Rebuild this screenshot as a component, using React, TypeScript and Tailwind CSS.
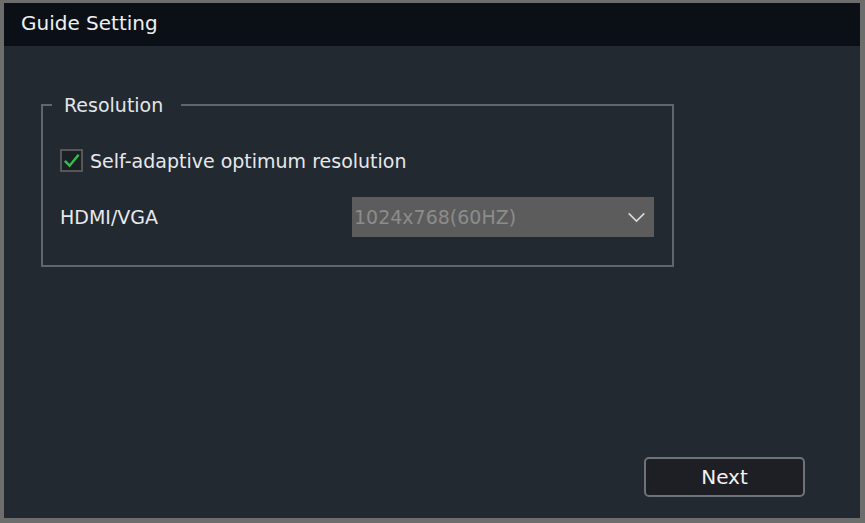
export default function App() {
  return (
    <div
      className="w-[865px] h-[523px] bg-[#6d6d6d] pl-[4px] pt-[3px] pr-[5px] pb-[5px]"
      style={{ fontFamily: '"DejaVu Sans", Verdana, sans-serif' }}
    >
      <div className="w-full h-full flex flex-col bg-[#222931]">
        <div className="h-[43px] bg-[#0b1017] flex items-center pl-[17px] pb-[3px]">
          <span className="text-[20px] text-[#eef0f2]">Guide Setting</span>
        </div>
        <div className="flex-1 flex flex-col pl-[37px] pt-[45px] pr-[5px] pb-[21px]">
          <fieldset className="w-[633px] h-[176px] border-2 border-[#5f666c] px-[17px] pt-[0px] m-0">
            <legend className="pl-[12px] pr-[18px] -ml-[8px] text-[19px] text-[#e3e6e9]">Resolution</legend>
            <div className="flex items-center gap-[7px] mt-[27px]">
              <div className="w-[23px] h-[23px] border-2 border-[#575757] bg-[#1a2026] flex items-center justify-center">
                <svg viewBox="0 0 20 20" className="w-[19px] h-[19px]">
                  <path d="M3 10.5 L8 15.5 L17.5 4" fill="none" stroke="#2fbf4a" strokeWidth="2.6" />
                </svg>
              </div>
              <span className="text-[19px] text-[#e6e8ea]">Self-adaptive optimum resolution</span>
            </div>
            <div className="flex items-center mt-[22px]">
              <span className="w-[292px] text-[19px] text-[#e6e8ea]">HDMI/VGA</span>
              <div className="w-[302px] h-[40px] bg-[#5c5c5c] flex items-center justify-between pl-[2px] pr-[8px]">
                <span className="text-[19px] text-[#8c8c8c]">1024x768(60HZ)</span>
                <svg viewBox="0 0 20 12" className="w-[19px] h-[11px]">
                  <path d="M1.5 1.5 L10 10 L18.5 1.5" fill="none" stroke="#d8d8d8" strokeWidth="1.8" />
                </svg>
              </div>
            </div>
          </fieldset>
          <div className="flex-1" />
          <div className="flex justify-end pr-[50px]">
            <button className="w-[161px] h-[40px] border-2 border-[#6e7378] rounded-[5px] bg-[#1e1f25] text-[20px] text-[#f2f2f2]">
              Next
            </button>
          </div>
        </div>
      </div>
    </div>
  );
}
